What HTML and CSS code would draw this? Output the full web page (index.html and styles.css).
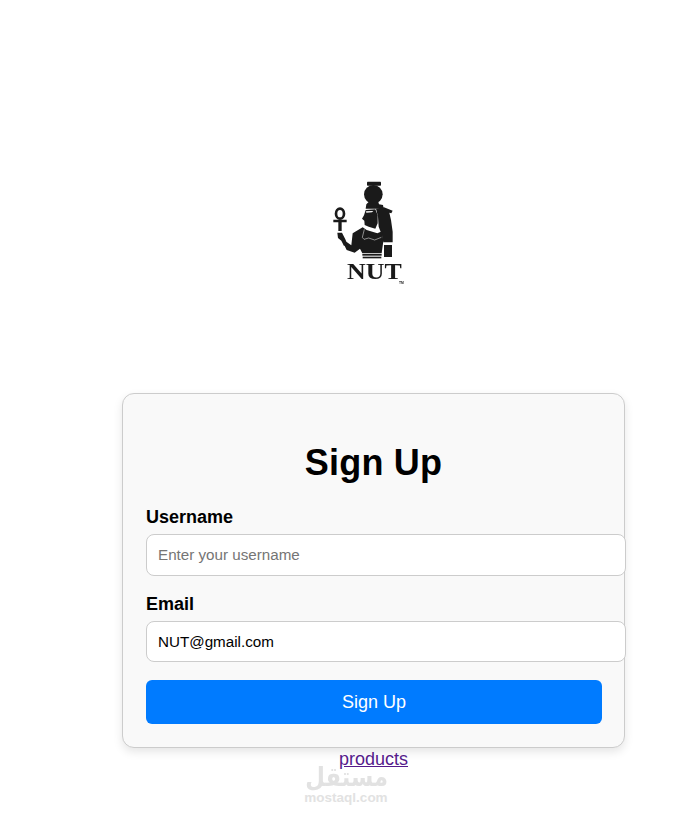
FILE: index.html
```html
<!DOCTYPE html>
<html lang="en">
<head>
  <meta charset="UTF-8" />
  <meta name="viewport" content="width=device-width, initial-scale=1.0"/>
  <title>Sign Up</title>
  <link rel="stylesheet" href="styles.css">
</head>
<body>

  <!-- Logo -->
  <div class="logo">
    <svg width="110" height="125" viewBox="0 0 330 375">
      <!-- jar -->
      <rect x="171" y="35" width="42" height="12" rx="2"/>
      <circle cx="190" cy="73" r="28"/>
      <path d="M176 96h29l2 7 12 2 2 11h-54l2-13z"/>
      <!-- hair -->
      <path d="M198 116 L222 112 L248 122 L244 130 L238 128 L243 150 L248 185 L248 217 L220 217 L216 196 L206 170 L204 140 Z"/>
      <path d="M222 225h24v36h-24z"/>
      <!-- face -->
      <path d="M167 120 L196 118 L203 136 L203 160 L196 176 L176 170 L164 165 L163 152 L156 146 L162 136 Z"/>
      <path d="M168 124l22-1-4 4-17 1z" class="cut"/>
      <!-- body -->
      <path d="M158 172 L170 180 L202 190 L216 184 L220 214 L215 250 L157 250 L150 236 L134 248 L110 240 L100 220 L110 216 L124 226 L128 190 Z"/>
      <path d="M157 252h58v5h-58z"/>
      <path d="M158 260h56v5h-56z"/>
      <path d="M163 178l-6 24 5 6 14-4 18 6 20-8" class="line"/>
      <!-- hand -->
      <path d="M82 188 L96 188 L106 208 L112 222 L102 228 L94 212 L84 204 Z"/>
      <!-- ankh -->
      <ellipse cx="90" cy="131" rx="12" ry="15" class="loop"/>
      <path d="M70 149h40v8H95v26h-10V157H70z"/>
      <!-- name -->
      <text x="111" y="328" class="logo-name" textLength="164" lengthAdjust="spacingAndGlyphs">NUT</text>
      <text x="267" y="342" class="logo-tm">TM</text>
    </svg>
  </div>

  <!-- Form -->
  <div class="card">
    <h1>Sign Up</h1>
    <form>
      <label for="username">Username</label>
      <input type="text" id="username" placeholder="Enter your username">
      <label for="email">Email</label>
      <input type="email" id="email" class="email" value="NUT@gmail.com">
      <button type="button">Sign Up</button>
    </form>
  </div>

  <div class="links">
    <a href="#">products</a>
    <div class="watermark">
      <span class="watermark-ar" lang="ar" dir="rtl">مستقل</span>
      <span class="watermark-en">mostaql.com</span>
    </div>
  </div>

</body>
</html>
```

FILE: styles.css
```css
body {
  font-family: "Liberation Sans", Arial, sans-serif;
  background: #fff;
  margin: 0;
  padding: 0 0 0 122px;
  color: #000;
}

.logo {
  padding: 170px 0 0 188px;
  height: 125px;
}

.logo svg {
  display: block;
  fill: #1a1a1a;
  filter: blur(0.3px);
}

.logo .cut {
  fill: #fff;
}

.logo .line {
  fill: none;
  stroke: #fff;
  stroke-width: 1.5;
}

.logo .loop {
  fill: none;
  stroke: #1a1a1a;
  stroke-width: 8;
}

.logo-name {
  font-family: "Liberation Serif", serif;
  font-weight: bold;
  font-size: 70px;
}

.logo-tm {
  font-family: "Liberation Sans", sans-serif;
  font-weight: bold;
  font-size: 10px;
}

.card {
  box-sizing: border-box;
  width: 503px;
  height: 355px;
  margin-top: 98px;
  padding: 47px 23px 0;
  background: #f9f9f9;
  border: 1px solid #ccc;
  border-radius: 12px;
  box-shadow: 0 4px 10px rgba(0,0,0,0.1);
}

h1 {
  margin: 0 0 21px;
  font-size: 36px;
  line-height: 44px;
  letter-spacing: 0.2px;
  text-align: center;
}

label {
  display: block;
  margin-bottom: 6px;
  font-size: 18px;
  line-height: 22px;
  font-weight: bold;
}

input {
  display: block;
  box-sizing: border-box;
  width: 480px;
  height: 42px;
  margin: 0 0 17px;
  padding: 0 11px 1px;
  font-family: inherit;
  font-size: 15.2px;
  color: #000;
  background: #fff;
  border: 1px solid #ccc;
  border-radius: 8px;
}

input.email {
  height: 41px;
  margin-bottom: 18px;
  padding-bottom: 0;
}

button {
  display: block;
  width: 456px;
  height: 44px;
  padding: 0;
  font-family: inherit;
  font-size: 18px;
  color: #fff;
  background: #007bff;
  border: none;
  border-radius: 6px;
  cursor: pointer;
}

.links {
  position: relative;
  width: 503px;
  height: 72px;
  text-align: center;
  font-size: 18px;
  line-height: 23px;
}

.links a {
  color: #551a8b;
}

.watermark {
  position: absolute;
  top: 15px;
  left: 182px;
  width: 84px;
  color: #e2e2e2;
  text-align: center;
}

.watermark span {
  display: block;
}

.watermark-ar {
  font-family: "DejaVu Sans", sans-serif;
  font-weight: bold;
  font-size: 26px;
  line-height: 28px;
  transform: scaleX(0.87);
  transform-origin: right center;
}

.watermark-en {
  font-weight: bold;
  font-size: 13.5px;
  line-height: 14px;
}
```
